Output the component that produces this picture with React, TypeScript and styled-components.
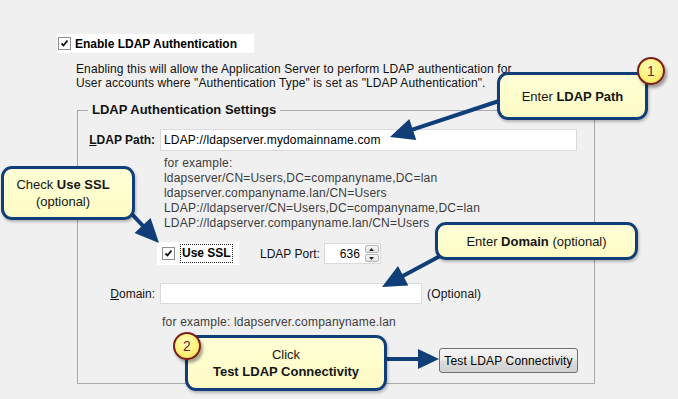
import React from "react";
import styled, { createGlobalStyle } from "styled-components";

const GlobalStyle = createGlobalStyle`
  html, body {
    margin: 0;
    padding: 0;
    background: #f0f0f0;
  }
  body {
    font-family: "Liberation Sans", Arial, sans-serif;
    font-size: 12px;
    color: #000;
  }
`;

const NAVY = "#0f3e78";

const Screen = styled.div`
  position: relative;
  width: 678px;
  height: 399px;
  overflow: hidden;
  background: #f0f0f0;
`;

const Panel = styled.div`
  display: flex;
  flex-direction: column;
  align-items: flex-start;
  padding: 34px 0 0 57px;
`;

const EnableRow = styled.div`
  display: flex;
  align-items: center;
  gap: 4px;
  width: 196px;
  height: 19px;
  padding-left: 1px;
  background: #fff;
  font-weight: bold;
`;

const Description = styled.div`
  margin: 9px 0 0 19px;
  line-height: 14px;
  letter-spacing: 0.1px;
  color: #111;
`;

const GroupBox = styled.fieldset`
  box-sizing: border-box;
  width: 518px;
  min-width: 0;
  margin: 12px 0 0 20px;
  padding: 11px 0 10px 0;
  border: 1px solid #a9a9a9;
  display: flex;
  flex-direction: column;
`;

const Legend = styled.legend`
  margin-left: 10px;
  padding: 0 4px;
  font-size: 13px;
  font-weight: bold;
  line-height: 16px;
  color: #111;
`;

const FieldRow = styled.div<{ $gap?: number }>`
  display: flex;
  align-items: center;
  margin-top: ${(p) => p.$gap ?? 0}px;
`;

const FieldLabel = styled.label<{ $bold?: boolean }>`
  width: 77px;
  margin-right: 5px;
  text-align: right;
  font-weight: ${(p) => (p.$bold ? "bold" : "normal")};
  color: #111;
`;

const TextBox = styled.div<{ $width: number; $height?: number }>`
  box-sizing: border-box;
  width: ${(p) => p.$width}px;
  height: ${(p) => p.$height ?? 21}px;
  display: flex;
  align-items: center;
  padding: 0 3px;
  background: #fff;
  border: 1px solid #dadada;
  letter-spacing: 0.15px;
  color: #000;
`;

const Hint = styled.div<{ $gap: number; $indent: number }>`
  margin: ${(p) => p.$gap}px 0 0 ${(p) => p.$indent}px;
  line-height: 15px;
  letter-spacing: 0.2px;
  color: #3c3c3c;
`;

const SslBox = styled.div`
  display: flex;
  align-items: center;
  gap: 5px;
  width: 82px;
  height: 23px;
  box-sizing: border-box;
  margin-left: 79px;
  padding-left: 5px;
  background: #fff;
`;

const FocusLabel = styled.span`
  padding: 1px 1px;
  border: 1px dotted #222;
  font-weight: bold;
  line-height: 15px;
`;

const PortLabel = styled.span`
  margin: 0 4px 0 21px;
  color: #111;
`;

const PortBox = styled.div`
  box-sizing: border-box;
  width: 57px;
  height: 21px;
  display: flex;
  align-items: center;
  justify-content: flex-end;
  gap: 5px;
  padding-right: 1px;
  background: #fff;
  border: 1px solid #dadada;
`;

const Spinner = styled.div`
  display: flex;
  flex-direction: column;
  gap: 1px;
`;

const SpinButton = styled.div`
  width: 14px;
  height: 8px;
  display: flex;
  align-items: center;
  justify-content: center;
  background: linear-gradient(#f6f6f6, #e2e2e2);
  border: 1px solid #b4b4b4;
  border-radius: 2px;
  box-sizing: border-box;
`;

const Optional = styled.span`
  margin-left: 5px;
  letter-spacing: 0.15px;
  color: #111;
`;

const ButtonRow = styled.div`
  display: flex;
  justify-content: flex-end;
  margin-top: 18px;
  padding-right: 16px;
`;

const PushButton = styled.button`
  width: 139px;
  height: 25px;
  padding: 0;
  font-family: "Liberation Sans", Arial, sans-serif;
  font-size: 12px;
  letter-spacing: 0.15px;
  color: #000;
  background: linear-gradient(#f4f4f4 0%, #ebebeb 48%, #dcdcdc 52%, #d0d0d0 100%);
  border: 1px solid #707070;
  border-radius: 3px;
`;

const CheckFrame = styled.span`
  box-sizing: border-box;
  width: 13px;
  height: 13px;
  display: inline-flex;
  align-items: center;
  justify-content: center;
  background: #fff;
  border: 1px solid #8e8f8f;
`;

const Callout = styled.div<{ $left: number; $top: number; $width: number; $height: number; $padRight?: number }>`
  position: absolute;
  left: ${(p) => p.$left}px;
  top: ${(p) => p.$top}px;
  width: ${(p) => p.$width}px;
  height: ${(p) => p.$height}px;
  box-sizing: border-box;
  display: flex;
  flex-direction: column;
  align-items: center;
  justify-content: center;
  padding-right: ${(p) => p.$padRight ?? 0}px;
  background: linear-gradient(#ffffd6, #fdfbc4);
  border: 3px solid ${NAVY};
  border-radius: 11px;
  box-shadow: 1px 2px 3px rgba(0, 0, 0, 0.25);
  font-size: 13px;
  line-height: 17px;
  color: #151515;
  text-align: center;
`;

const Badge = styled.div<{ $cx: number; $cy: number }>`
  position: absolute;
  left: ${(p) => p.$cx - 14}px;
  top: ${(p) => p.$cy - 14}px;
  width: 28px;
  height: 28px;
  box-sizing: border-box;
  display: flex;
  align-items: center;
  justify-content: center;
  border-radius: 50%;
  border: 2px solid #7a1e1e;
  background: radial-gradient(circle at 45% 35%, #ffffc0 0%, #fff27a 55%, #ecd94a 100%);
  box-shadow: 2px 3px 3px rgba(0, 0, 0, 0.35);
  color: #7a1e1e;
  font-size: 14px;
`;

const Overlay = styled.svg`
  position: absolute;
  left: 0;
  top: 0;
  pointer-events: none;
`;

const Check: React.FC = () => (
  <CheckFrame>
    <svg width="9" height="9" viewBox="0 0 9 9">
      <path d="M1.5 4.5 L3.5 6.5 L7.5 1.5" fill="none" stroke="#111" strokeWidth="1.8" />
    </svg>
  </CheckFrame>
);

type Pt = [number, number];

const Arrow: React.FC<{ from: Pt; to: Pt; head?: number; half?: number }> = ({
  from,
  to,
  head = 24,
  half = 11,
}) => {
  const dx = to[0] - from[0];
  const dy = to[1] - from[1];
  const len = Math.hypot(dx, dy);
  const ux = dx / len;
  const uy = dy / len;
  const bx = to[0] - ux * head;
  const by = to[1] - uy * head;
  const nx = -uy;
  const ny = ux;
  const pts = [
    `${to[0]},${to[1]}`,
    `${bx + nx * half},${by + ny * half}`,
    `${bx - nx * half},${by - ny * half}`,
  ].join(" ");
  return (
    <g>
      <line x1={from[0]} y1={from[1]} x2={bx + ux * 2} y2={by + uy * 2} stroke={NAVY} strokeWidth={4} />
      <polygon points={pts} fill={NAVY} />
    </g>
  );
};

export default function App() {
  return (
    <Screen>
      <GlobalStyle />
      <Panel>
        <EnableRow>
          <Check />
          <span>Enable LDAP Authentication</span>
        </EnableRow>
        <Description>
          Enabling this will allow the Application Server to perform LDAP authentication for
          <br />
          User accounts where "Authentication Type" is set as "LDAP Authentication".
        </Description>
        <GroupBox>
          <Legend>LDAP Authentication Settings</Legend>
          <FieldRow>
            <FieldLabel $bold>
              <u>L</u>DAP Path:
            </FieldLabel>
            <TextBox $width={417} $height={22}>
              LDAP://ldapserver.mydomainname.com
            </TextBox>
          </FieldRow>
          <Hint $gap={5} $indent={86}>
            for example:
            <br />
            ldapserver/CN=Users,DC=companyname,DC=lan
            <br />
            ldapserver.companyname.lan/CN=Users
            <br />
            LDAP://ldapserver/CN=Users,DC=companyname,DC=lan
            <br />
            LDAP://ldapserver.companyname.lan/CN=Users
          </Hint>
          <FieldRow $gap={11}>
            <SslBox>
              <Check />
              <FocusLabel>Use SSL</FocusLabel>
            </SslBox>
            <PortLabel>LDAP Port:</PortLabel>
            <PortBox>
              <span>636</span>
              <Spinner>
                <SpinButton>
                  <svg width="5" height="3" viewBox="0 0 5 3">
                    <path d="M0 3 L2.5 0 L5 3 Z" fill="#222" />
                  </svg>
                </SpinButton>
                <SpinButton>
                  <svg width="5" height="3" viewBox="0 0 5 3">
                    <path d="M0 0 L2.5 3 L5 0 Z" fill="#222" />
                  </svg>
                </SpinButton>
              </Spinner>
            </PortBox>
          </FieldRow>
          <FieldRow $gap={18}>
            <FieldLabel>
              <u>D</u>omain:
            </FieldLabel>
            <TextBox $width={262} />
            <Optional>(Optional)</Optional>
          </FieldRow>
          <Hint $gap={11} $indent={84}>
            for example: ldapserver.companyname.lan
          </Hint>
          <ButtonRow>
            <PushButton>Test LDAP Connectivity</PushButton>
          </ButtonRow>
        </GroupBox>
      </Panel>

      <Overlay width={678} height={399}>
        <Arrow from={[499, 101]} to={[390, 137]} />
        <Arrow from={[128, 210]} to={[159, 243]} />
        <Arrow from={[442, 255]} to={[382, 287]} />
        <Arrow from={[385, 359]} to={[439, 359]} head={21} half={10} />
      </Overlay>

      <Callout $left={497} $top={72} $width={151} $height={48}>
        <div>
          Enter <b>LDAP Path</b>
        </div>
      </Callout>
      <Badge $cx={651} $cy={71}>1</Badge>

      <Callout $left={1} $top={166} $width={134} $height={54} $padRight={10}>
        <div>
          Check <b>Use SSL</b>
        </div>
        <div>(optional)</div>
      </Callout>

      <Callout $left={435} $top={222} $width={203} $height={38}>
        <div>
          Enter <b>Domain</b> (optional)
        </div>
      </Callout>

      <Callout $left={185} $top={335} $width={202} $height={56}>
        <div>Click</div>
        <div>
          <b>Test LDAP Connectivity</b>
        </div>
      </Callout>
      <Badge $cx={187} $cy={346}>2</Badge>
    </Screen>
  );
}
